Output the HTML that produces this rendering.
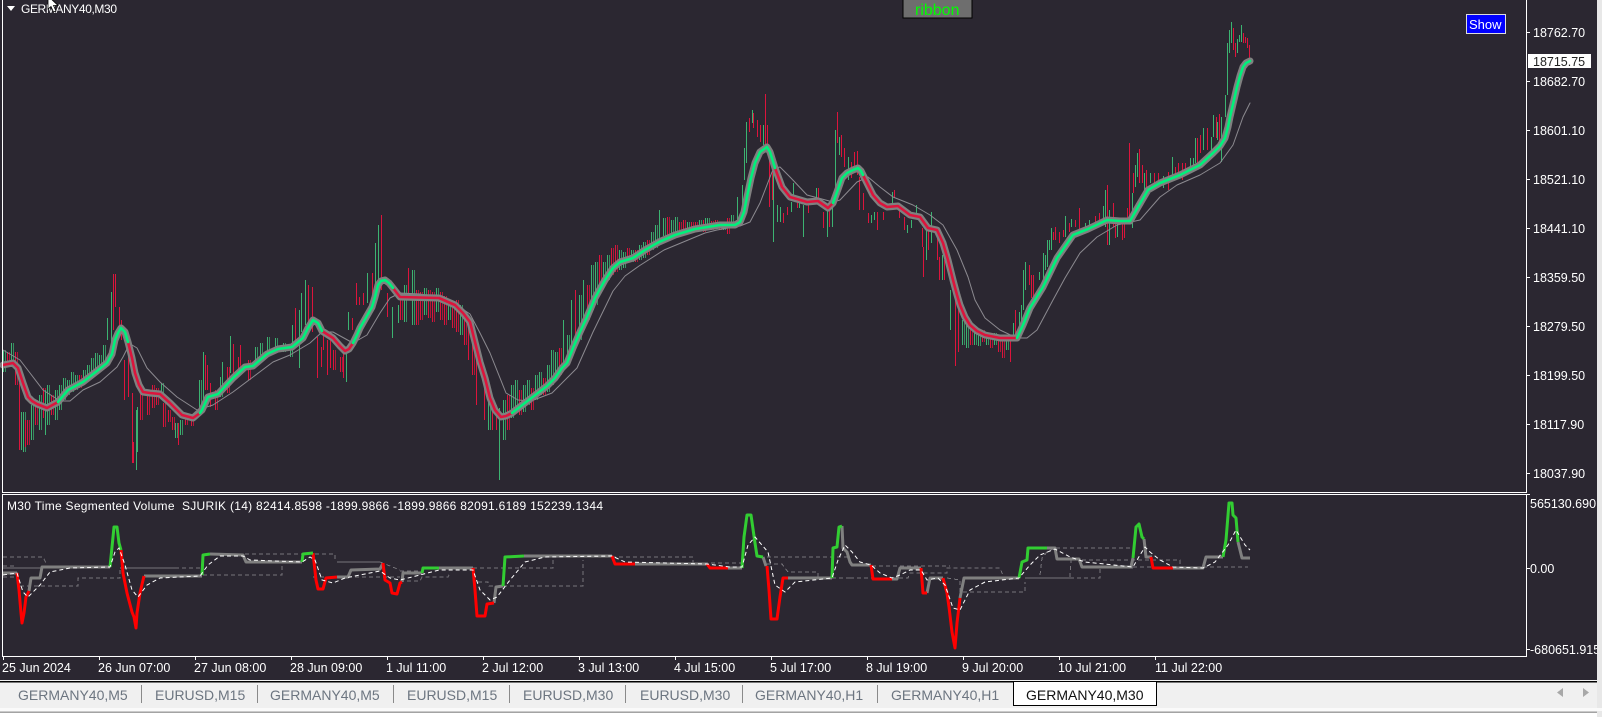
<!DOCTYPE html>
<html><head><meta charset="utf-8"><title>GERMANY40,M30</title>
<style>
html,body{margin:0;padding:0;background:#2b2731;width:1602px;height:717px;overflow:hidden}
svg{display:block;position:absolute;left:0;top:0}
text{font-family:"Liberation Sans",sans-serif;font-size:12.5px;fill:#fff;white-space:pre}
.t{font-size:14px;fill:#6c7580}
</style></head><body>
<svg width="1602" height="717" viewBox="0 0 1602 717" xmlns="http://www.w3.org/2000/svg">
<rect width="1602" height="717" fill="#2b2731"/>
<defs>
<path id="sg" d="M3 350V372M11 343V367M23 412V452M31 405V440M39 395V430M47 385V425M55 390V420M59 385V410M63 378V400M67 380V395M71 372V392M75 375V390M83 370V382M87 365V380M91 358V372M95 353V372M99 355V365M103 345V365M199 380V410M220 377V397M255 347V363M260 343V355M267 337V353M275 338V350M283 343V352M290 350V357M161 383V397M175 423V438M180 420V435M404 285V322M412 270V325M424 288V315M436 288V312M448 300V320M460 305V335M488 395V430M503 400V440M511 385V418M515 380V410M523 385V412M527 380V405M535 375V400M539 372V395M547 365V392M551 350V385M555 352V380M567 335V362M579 295V340M591 265V310M595 262V305M603 262V285M607 255V280M619 250V270M623 252V268M631 250V262M639 245V260M643 242V258M651 232V250M655 225V248M663 218V236M671 220V234M675 217V232M687 222V232M699 220V230M707 218V228M723 222V230M731 215V228M962 320V345M966 325V348M974 330V345M978 332V346M986 335V345M994 333V345M1006 338V350"/>
<path id="sr" d="M7 352V366M15 352V385M27 420V445M35 400V425M43 388V418M51 395V415M79 375V388M140 393V420M147 393V415M152 385V408M156 388V405M163 403V427M168 410V422M172 417V430M185 415V425M191 420V426M215 390V410M227 367V393M238 357V370M248 360V380M333 350V370M340 357V372M400 293V320M416 290V325M420 292V320M428 290V318M432 292V322M440 292V320M444 296V325M452 302V328M456 300V332M464 312V345M472 330V375M507 395V430M519 390V415M531 388V410M543 378V395M559 348V375M587 285V320M599 255V290M611 248V275M615 245V272M627 248V262M635 250V262M647 240V255M667 217V236M679 222V235M683 220V232M691 222V230M695 222V232M703 220V232M711 221V230M715 220V228M719 222V230M727 218V234M970 325V345M982 330V342M990 333V348M998 335V352M1002 335V358"/>
</defs>
<g shape-rendering="crispEdges" fill="none" stroke-width="1">
<g transform="translate(.5 0)">
<use href="#sg" stroke="#3cb371"/><use href="#sg" x="2" stroke="#3cb371" opacity=".75"/>
<use href="#sr" stroke="#dc143c"/><use href="#sr" x="2" stroke="#dc143c" opacity=".75"/>
<path stroke="#3cb371" d="M21 412V450M45 390V435M107 318V340M111 292V345M136 410V470M137 407V452M203 352V403M222 362V387M230 336V373M292 325V352M299 310V368M301 293V332M305 280V325M346 353V382M348 312V330M367 273V303M375 243V285M378 225V285M392 307V338M398 305V323M499 408V480M563 320V368M571 300V350M583 280V325M659 210V240M705 218V227M737 197V224M742 185V220M744 148V180M746 122V163M752 110V123M763 125V145M773 170V242M777 205V222M780 207V222M791 202V212M793 183V198M799 202V208M803 205V237M816 188V203M827 208V237M832 208V227M835 130V197M839 137V155M848 157V180M871 215V223M874 212V220M892 192V207M907 225V233M911 220V228M916 205V217M926 230V260M931 212V243M942 255V280M950 290V330M1013 323V338M1019 312V335M1021 305V330M1023 270V310M1025 262V290M1039 272V280M1043 253V280M1045 255V270M1047 240V267M1049 240V250M1051 228V250M1065 216V237M1071 219V227M1085 223V232M1089 220V227M1103 206V223M1105 190V227M1109 210V245M1117 223V237M1132 193V228M1135 165V187M1137 153V177M1144 173V190M1150 173V183M1163 176V188M1172 157V177M1190 158V167M1193 158V170M1195 138V163M1203 128V150M1211 137V153M1213 115V137M1217 122V140M1221 117V162M1225 95V117M1227 43V95M1229 30V53M1231 22V43M1237 39V53M1239 35V42M1241 25V42"/>
<path stroke="#dc143c" d="M19 383V450M25 420V447M113 274V330M115 274V307M119 307V337M121 320V340M124 360V400M128 347V397M132 393V463M133 442V463M178 423V445M205 355V390M207 365V390M210 383V407M233 344V378M240 345V365M295 308V345M308 285V328M312 287V332M317 337V378M321 347V367M323 333V350M327 340V375M330 340V368M343 350V378M352 318V330M356 283V305M359 297V305M363 293V305M372 273V310M381 215V290M387 293V317M408 268V300M468 325V360M476 345V405M484 370V420M492 400V430M496 405V430M575 290V345M749 118V132M753 113V128M757 120V137M760 125V142M765 94V145M767 125V147M769 145V207M772 170V200M783 213V223M787 207V215M797 202V208M808 205V213M818 188V202M823 212V228M829 208V227M837 112V143M841 135V157M844 148V167M851 162V178M854 152V173M857 151V175M859 177V210M863 193V210M868 213V223M877 212V230M883 212V220M894 190V198M899 208V218M904 217V230M922 228V247M923 247V277M928 230V250M937 232V260M939 257V280M944 260V280M955 286V366M958 300V352M1010 337V362M1015 310V338M1029 265V285M1031 275V298M1033 275V300M1053 232V240M1055 227V240M1059 232V243M1063 230V237M1069 223V232M1075 220V227M1079 208V233M1095 216V223M1099 213V223M1107 185V245M1113 203V227M1115 223V238M1122 223V240M1124 223V238M1127 208V223M1129 143V223M1133 173V193M1139 149V183M1142 165V183M1146 170V187M1154 173V183M1158 173V187M1168 172V190M1175 167V177M1178 163V177M1182 163V180M1185 163V173M1197 138V163M1200 135V153M1207 128V150M1216 117V138M1219 114V143M1233 28V50M1235 43V57M1243 33V43M1245 37V43M1247 38V48M1249 45V60"/>
</g>
</g>
<g fill="none" stroke-linejoin="round" stroke-linecap="round">
<!-- slow MA -->
<polyline stroke="#8c8a90" stroke-width="1" points="3,350 20,360 30,373 43,390 60,401 70,401 83,390 100,382 117,367 123,357 128,347 132,345 137,348 147,368 160,382 177,397 197,410 213,405 233,392 253,377 273,362 290,355 310,343 322,332 333,332 353,343 367,335 380,313 390,298 400,293 420,294 439,298 455,304 470,314 480,333 490,353 506,393 518,400 531,401 552,393 577,368 593,332 613,291 625,276 639,266 664,250 705,233 717,230 740,226 750,222 760,203 772,172 776,168 780,167 790,177 807,195 833,202 840,200 857,182 868,177 880,187 893,197 913,205 930,215 943,225 957,250 968,277 975,300 985,318 1000,330 1017,338 1027,338 1037,330 1053,300 1065,278 1080,253 1097,237 1117,225 1140,220 1160,197 1177,185 1200,175 1220,163 1233,145 1243,117 1250,103"/>
<!-- ribbon -->
<polyline stroke="#808080" stroke-width="7" points="3,365 13,363 18,368 23,383 28,397 32,401 37,404 47,408 58,402 68,390 83,382 97,371 107,363 112,354 115,340 118,333 121,328 125,332 128,342 132,358 135,373 139,385 143,392 150,393 160,394 170,403 182,415 193,418 202,410 208,397 218,394 233,378 245,367 253,366 267,354 278,349 292,347 303,338 308,328 313,320 318,323 322,331 333,338 340,346 345,351 349,349 353,343 357,335 360,328 372,307 375,297 378,285 381,281 385,280 389,283 393,288 400,297 439,298 455,305 463,313 470,322 475,342 480,362 485,378 490,398 495,410 501,417 506,416 512,413 521,406 547,386 555,378 562,368 567,363 573,348 580,332 587,317 595,298 605,280 613,268 620,262 633,258 645,250 659,242 675,235 695,229 720,225 735,225 740,222 744,212 747,197 751,178 755,163 760,152 767,147 770,152 775,168 782,187 790,197 807,202 818,201 828,208 833,203 837,192 842,178 847,173 853,170 858,168 861,171 863,175 868,185 873,195 880,203 887,207 898,206 910,215 920,217 928,228 937,230 943,243 948,260 953,280 957,295 960,305 965,317 970,325 977,331 985,335 1000,338 1017,338 1023,325 1030,308 1043,287 1057,258 1073,235 1088,229 1107,220 1120,221 1130,221 1138,207 1148,190 1160,183 1180,175 1200,165 1213,153 1220,146 1225,138 1228,127 1230,117 1237,87 1240,76 1243,67 1246,63 1250,61"/>
<g stroke="#dc143c" stroke-width="2.600">
<polyline points="3,365 13,363 18,368 23,383 28,397 32,401 37,404 47,408 58,402"/>
<polyline points="128,342 132,358 135,373 139,385 143,392 150,393 160,394 170,403 182,415 193,418 200,413"/>
<polyline points="322,331 333,338 340,346 345,351 349,349 353,343"/>
<polyline points="393,288 400,297 439,298 455,305 463,313 470,322 475,342 480,362 485,378 490,398 495,410 501,417 506,416 512,413"/>
<polyline points="775,168 782,187 790,197 807,202 818,201 828,208 833,203"/>
<polyline points="863,175 868,185 873,195 880,203 887,207 898,206 910,215 920,217 928,228 937,230 943,243 948,260 953,280 957,295 960,305 965,317 970,325 977,331 985,335 1000,338 1017,338"/>
</g>
<g stroke="#00f07a" stroke-width="2.600">
<polyline points="58,402 68,390 83,382 97,371 107,363 112,354 115,340 118,333 121,328 125,332 128,342"/>
<polyline points="200,413 202,410 208,397 218,394 233,378 245,367 253,366 267,354 278,349 292,347 303,338 308,328 313,320 318,323 322,331"/>
<polyline points="353,343 357,335 360,328 372,307 375,297 378,285 381,281 385,280 389,283 393,288"/>
<polyline points="512,413 521,406 547,386 555,378 562,368 567,363 573,348 580,332 587,317 595,298 605,280 613,268 620,262 633,258 645,250 659,242 675,235 695,229 720,225 735,225 740,222 744,212 747,197 751,178 755,163 760,152 767,147 770,152 775,168"/>
<polyline points="833,203 837,192 842,178 847,173 853,170 858,168 861,171 863,175"/>
<polyline points="1017,338 1023,325 1030,308 1043,287 1057,258 1073,235 1088,229 1107,220 1120,221 1130,221 1138,207 1148,190 1160,183 1180,175 1200,165 1213,153 1220,146 1225,138 1228,127 1230,117 1237,87 1240,76 1243,67 1246,63 1250,61"/>
</g>
</g>
<!-- indicator thin dashed bands -->
<g fill="none" stroke="#77757b" stroke-width="1" stroke-dasharray="4 3" shape-rendering="crispEdges">
<path d="M3 557H43L46 563M3 566H15M3 577H17M20 586H78V578H120V568M175 568H202M203 575H282V563M245 554H335V562M380 562L400 570M313 577H400M400 571H420M400 581H420L422 577H448L450 573M473 568H553V559M478 582H488L489 586H583V560M612 557H693V563H742M767 564H782L788 572H818V578H832M767 557H850M832 578H850M850 578H908L910 573H947V568H1000L1004 578M872 566H950M947 578L960 580V592H1025V582M1070 578H1100V568H1133M1040 575L1042 558L1047 552L1055 548H1133L1135 550M1070 577L1071 560H1180V567M1133 567H1248"/>
</g>
<path d="M3 568H60M120 568H175M337 562H380M1025 578H1070" stroke="#77757b" stroke-width="1" fill="none" shape-rendering="crispEdges"/>
<!-- indicator main -->
<g fill="none" stroke-width="3" stroke-linejoin="round">
<g stroke="#808080">
<polyline points="3,573 17,573"/>
<polyline points="29,591 31,578 40,578 42,567 110,567"/>
<polyline points="144,576 202,576"/>
<polyline points="210,554 243,555 246,562 302,562"/>
<polyline points="337,577 348,577 351,570 380,569 383,563"/>
<polyline points="402,582 403,573 422,573"/>
<polyline points="439,568 473,568"/>
<polyline points="494,603 496,587 503,586"/>
<polyline points="524,556 612,556"/>
<polyline points="635,564 707,564"/>
<polyline points="728,568 742,568"/>
<polyline points="763,557 766,566"/>
<polyline points="788,578 832,578"/>
<polyline points="842,526 843,548 847,552 850,562 852,565 871,565"/>
<polyline points="892,579 897,579 900,568 921,568"/>
<polyline points="927,593 930,578 943,578"/>
<polyline points="960,598 964,578 1019,578"/>
<polyline points="1047,548 1055,548 1057,559 1079,559 1082,567 1131,567 1133,558"/>
<polyline points="1144,539 1146,557 1152,557"/>
<polyline points="1173,568 1203,568 1206,557 1223,557"/>
<polyline points="1238,542 1242,558 1250,558"/>
</g>
<g stroke="#ff0000">
<polyline points="17,573 19,590 21,613 22,623 24,613 26,597 29,591"/>
<polyline points="121,550 123,573 127,593 132,612 134,617 136,628 137,613 140,593 144,576"/>
<polyline points="313,553 316,580 318,589 323,589 326,578 337,577"/>
<polyline points="383,563 385,580 390,583 392,593 397,594 400,583 402,582"/>
<polyline points="473,568 475,590 477,616 485,616 487,604 494,603"/>
<polyline points="612,556 615,564 635,564"/>
<polyline points="707,564 710,568 728,568"/>
<polyline points="767,566 769,590 771,619 777,619 780,597 783,578 788,578"/>
<polyline points="871,565 873,579 892,579"/>
<polyline points="921,568 923,593 927,593"/>
<polyline points="943,578 947,593 949,607 952,632 955,648 957,623 960,598"/>
<polyline points="1151,557 1153,568 1173,568"/>
</g>
<g stroke="#32cd32">
<polyline points="110,567 113,537 114,527 117,527 119,543 121,550"/>
<polyline points="202,575 203,555 210,554"/>
<polyline points="302,562 303,554 313,553"/>
<polyline points="422,573 423,568 439,568"/>
<polyline points="503,586 505,557 524,556"/>
<polyline points="742,568 744,537 747,515 751,515 755,543 757,556 763,557"/>
<polyline points="832,578 833,548 837,547 839,527 842,526"/>
<polyline points="1019,578 1022,562 1027,560 1028,548 1047,548"/>
<polyline points="1133,558 1136,527 1139,524 1142,537 1144,539"/>
<polyline points="1223,557 1226,540 1229,503 1232,503 1233,515 1236,518 1238,542"/>
</g>
</g>
<polyline fill="none" stroke="#fff" stroke-width="1" stroke-dasharray="4 3" points="3,575 17,573 23,592 28,597 40,585 50,572 70,568 110,567 115,552 119,548 125,565 132,590 138,597 147,585 160,578 200,576 208,565 220,556 243,556 250,560 302,562 310,557 315,560 322,580 333,583 345,578 380,571 390,578 400,580 420,575 439,570 473,570 480,590 490,600 497,597 510,580 525,562 545,557 612,556 625,562 707,564 730,567 742,567 748,545 755,537 768,552 775,585 785,592 795,582 832,578 838,560 845,545 852,552 860,562 871,565 880,573 892,578 900,575 910,570 921,570 927,580 938,578 945,585 953,608 960,610 970,590 985,582 1019,578 1030,565 1040,555 1055,549 1070,557 1085,562 1133,567 1140,555 1145,547 1150,552 1160,560 1173,567 1203,568 1215,562 1228,545 1236,530 1245,545 1250,550"/>
<!-- frames -->
<g fill="none" stroke="#fff" stroke-width="1" shape-rendering="crispEdges">
<path d="M2.5 0V492.5H1526.5V0"/>
<rect x="2.5" y="494.5" width="1524" height="162"/>
<path d="M1527 32.5H1530M1527 81.5H1530M1527 130.5H1530M1527 179.5H1530M1527 228.5H1530M1527 277.5H1530M1527 326.5H1530M1527 375.5H1530M1527 424.5H1530M1527 473.5H1530M1527 494.5H1530M1527 568.5H1530M1527 649.5H1530"/>
<path d="M3.5 657V660M99.5 657V660M195.5 657V660M291.5 657V660M387.5 657V660M483.5 657V660M579.5 657V660M675.5 657V660M771.5 657V660M867.5 657V660M963.5 657V660M1059.5 657V660M1155.5 657V660"/>
</g>
<!-- price axis -->
<text x="1533" y="37">18762.70</text>
<rect x="1528" y="54" width="63" height="14" fill="#fff"/>
<text x="1533" y="66" style="fill:#222">18715.75</text>
<text x="1533" y="86">18682.70</text>
<text x="1533" y="135">18601.10</text>
<text x="1533" y="184">18521.10</text>
<text x="1533" y="233">18441.10</text>
<text x="1533" y="282">18359.50</text>
<text x="1533" y="331">18279.50</text>
<text x="1533" y="380">18199.50</text>
<text x="1533" y="429">18117.90</text>
<text x="1533" y="478">18037.90</text>
<text x="1530" y="508">565130.690</text>
<text x="1530" y="573">0.00</text>
<text x="1530" y="654">-680651.915</text>
<!-- time axis -->
<text x="2" y="672">25 Jun 2024</text>
<text x="98" y="672">26 Jun 07:00</text>
<text x="194" y="672">27 Jun 08:00</text>
<text x="290" y="672">28 Jun 09:00</text>
<text x="386" y="672">1 Jul 11:00</text>
<text x="482" y="672">2 Jul 12:00</text>
<text x="578" y="672">3 Jul 13:00</text>
<text x="674" y="672">4 Jul 15:00</text>
<text x="770" y="672">5 Jul 17:00</text>
<text x="866" y="672">8 Jul 19:00</text>
<text x="962" y="672">9 Jul 20:00</text>
<text x="1058" y="672">10 Jul 21:00</text>
<text x="1155" y="672">11 Jul 22:00</text>
<!-- labels -->
<path d="M7 6H15L11 11Z" fill="#fff"/>
<text x="21" y="13" textLength="96" lengthAdjust="spacing" style="font-size:12px">GERMANY40,M30</text>
<path d="M48 -4V9L51 6.500L53.500 12L56 11L53.500 5.500L58 5.500Z" fill="#fff" stroke="#000" stroke-width=".8"/>
<text x="7" y="510" textLength="596" lengthAdjust="spacing" xml:space="preserve" style="font-size:12px">M30 Time Segmented Volume  SJURIK (14) 82414.8598 -1899.9866 -1899.9866 82091.6189 152239.1344</text>
<!-- ribbon button -->
<rect x="903" y="-2" width="69" height="20" fill="#6e6e6e" stroke="#000" stroke-width="1"/>
<text x="915" y="15" style="font-size:16px;fill:#00ff00">ribbon</text>
<!-- show button -->
<rect x="1466.500" y="14.500" width="39" height="19" fill="#0000ff" stroke="#dcdcdc" stroke-width="1"/>
<text x="1469" y="29" style="font-size:13px">Show</text>
<!-- tab bar -->
<rect x="0" y="680" width="1602" height="37" fill="#f0f0f0"/>
<rect x="1597" y="0" width="5" height="717" fill="#e8e8e8"/>
<rect x="0" y="681" width="1597" height="1.500" fill="#000"/>
<rect x="0" y="708" width="1602" height="3" fill="#fafafa"/>
<rect x="0" y="711.500" width="1597" height="1.500" fill="#a3a3a3"/>
<rect x="0" y="713" width="1597" height="4" fill="#ffffff"/>
<path d="M141.500 685V703M257.500 685V703M393.500 685V703M509.500 685V703M625.500 685V703M742.500 685V703M877.500 685V703" stroke="#8a8a8a" stroke-width="1" shape-rendering="crispEdges"/>
<text class="t" x="18" y="700">GERMANY40,M5</text>
<text class="t" x="155" y="700">EURUSD,M15</text>
<text class="t" x="270" y="700">GERMANY40,M5</text>
<text class="t" x="407" y="700">EURUSD,M15</text>
<text class="t" x="523" y="700">EURUSD,M30</text>
<text class="t" x="640" y="700">EURUSD,M30</text>
<text class="t" x="755" y="700">GERMANY40,H1</text>
<text class="t" x="891" y="700">GERMANY40,H1</text>
<path d="M1013.500 682V705.500H1156.500V682" fill="#fff" stroke="#000" stroke-width="1" shape-rendering="crispEdges"/>
<text class="t" x="1026" y="700" style="fill:#111">GERMANY40,M30</text>
<path d="M1563 688V697L1557 692.500Z M1583 688V697L1589 692.500Z" fill="#a8a8a8"/>
</svg>
</body></html>
